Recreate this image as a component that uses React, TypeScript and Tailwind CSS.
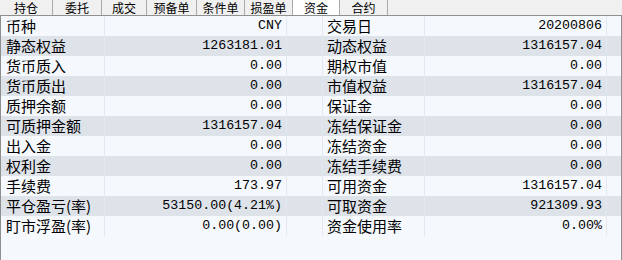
const tabs = [
  { label: "持仓", w: "w-[53px]" },
  { label: "委托", w: "w-[49px]" },
  { label: "成交", w: "w-[45px]" },
  { label: "预备单", w: "w-[50px]" },
  { label: "条件单", w: "w-[48px]" },
  { label: "损盈单", w: "w-[48px]" },
  { label: "资金", w: "w-[47px]", active: true },
  { label: "合约", w: "w-[48px]" },
];

// [左标签, 左值, 右标签, 右值]
const rows: [string, string, string, string][] = [
  ["币种", "CNY", "交易日", "20200806"],
  ["静态权益", "1263181.01", "动态权益", "1316157.04"],
  ["货币质入", "0.00", "期权市值", "0.00"],
  ["货币质出", "0.00", "市值权益", "1316157.04"],
  ["质押余额", "0.00", "保证金", "0.00"],
  ["可质押金额", "1316157.04", "冻结保证金", "0.00"],
  ["出入金", "0.00", "冻结资金", "0.00"],
  ["权利金", "0.00", "冻结手续费", "0.00"],
  ["手续费", "173.97", "可用资金", "1316157.04"],
  ["平仓盈亏(率)", "53150.00(4.21%)", "可取资金", "921309.93"],
  ["盯市浮盈(率)", "0.00(0.00)", "资金使用率", "0.00%"],
];

const cjk = "font-['Noto_Sans_CJK_SC','Noto_Sans',sans-serif]";
const mono = "font-['Liberation_Mono','Noto_Sans_CJK_SC',monospace]";

export default function App() {
  return (
    <div className="flex h-[260px] w-[622px] flex-col overflow-hidden bg-[#f5f8fc] text-black">
      <div className="flex h-[16px] shrink-0 border-b border-[#8e8f8f] bg-[#f0f0f0]">
        {tabs.map((t) => (
          <div
            key={t.label}
            className={`${t.w} flex h-[15px] items-center justify-center border-r border-[#a9a9a9] text-[12px] leading-[15px] ${cjk} ${
              t.active ? "bg-white" : "bg-[#f0f0f0]"
            }`}
          >
            {t.label}
          </div>
        ))}
      </div>
      <div className="flex-1 border-x border-[#8e8f8f]">
        {rows.map((r, i) => (
          <div
            key={r[0]}
            className={`grid h-[20px] grid-cols-[104px_182px_36px_102px_182px_1fr] ${
              i % 2 ? "bg-[#dee3ea]" : "bg-[#f5f8fc]"
            }`}
          >
            <div className={`border-r border-[#e3e7ee] pl-[5px] text-[15px] leading-[20px] ${cjk}`}>{r[0]}</div>
            <div className={`border-r border-[#e3e7ee] pr-[4px] text-right text-[13.3px] leading-[20px] ${mono}`}>{r[1]}</div>
            <div className="border-r border-[#e3e7ee]" />
            <div className={`border-r border-[#e3e7ee] pl-[4px] text-[15px] leading-[20px] whitespace-nowrap ${cjk}`}>{r[2]}</div>
            <div className={`border-r border-[#e3e7ee] pr-[4px] text-right text-[13.3px] leading-[20px] ${mono}`}>{r[3]}</div>
            <div />
          </div>
        ))}
      </div>
    </div>
  );
}
